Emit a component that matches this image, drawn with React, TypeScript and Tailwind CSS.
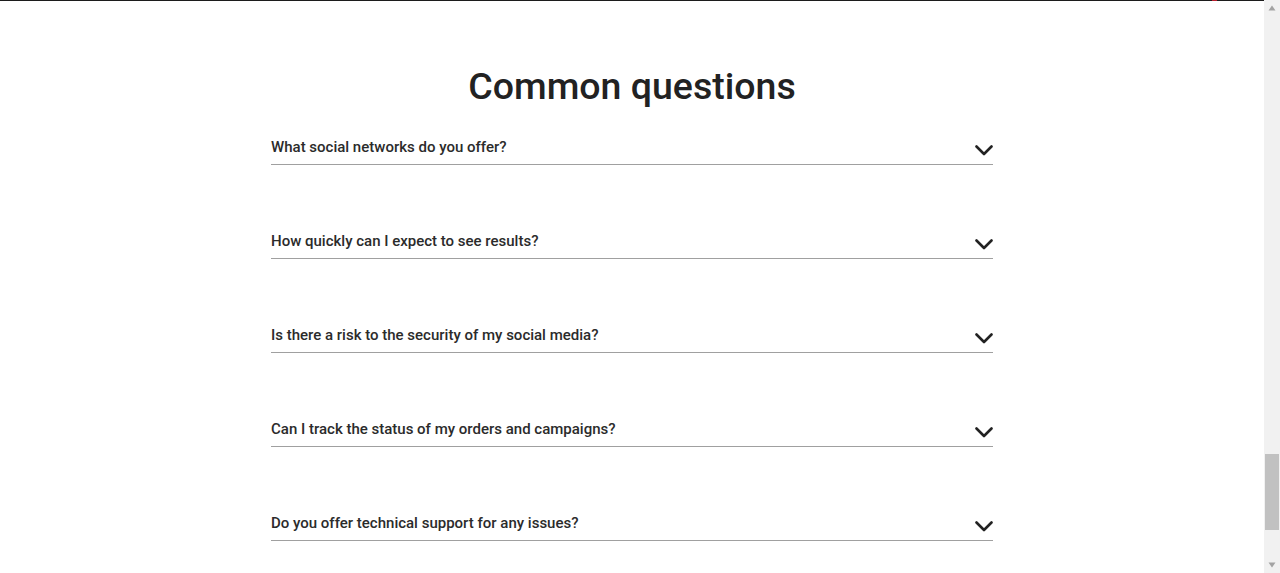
import { useState } from "react";

const questions = [
  "What social networks do you offer?",
  "How quickly can I expect to see results?",
  "Is there a risk to the security of my social media?",
  "Can I track the status of my orders and campaigns?",
  "Do you offer technical support for any issues?",
];

const Chevron = () => (
  <svg width="18" height="11" viewBox="0 0 18 11" className="mt-[8px] shrink-0">
    <polyline
      points="1.5,1.5 9,9 16.5,1.5"
      fill="none"
      stroke="#222"
      strokeWidth="2.6"
      strokeLinecap="round"
      strokeLinejoin="round"
    />
  </svg>
);

const FaqItem = ({ question }: { question: string }) => {
  const [open, setOpen] = useState(false);
  return (
    <div>
      <button
        type="button"
        onClick={() => setOpen(!open)}
        className="flex w-full items-start justify-between border-b border-[#a0a0a0] pb-[7px] text-left"
      >
        <span className="text-[15px] leading-5 font-medium text-[#2b2b2b]">{question}</span>
        <Chevron />
      </button>
    </div>
  );
};

const App = () => {
  return (
    <div className="flex h-[573px] w-full overflow-hidden bg-white font-['Roboto',sans-serif]">
      <div className="flex-1 flex flex-col">
        {/* top border */}
        <div className="flex h-[1px] bg-[#1c1c1c]">
          <div className="ml-[1212px] w-[5px] bg-[#b8202e]" />
        </div>

        <div className="mx-auto w-[722px] pt-[65px]">
          <h2 className="text-center text-[37.5px] leading-10 font-medium text-[#222]">
            Common questions
          </h2>

          <div className="mt-[31px] flex flex-col gap-[66px]">
            {questions.map((q) => (
              <FaqItem key={q} question={q} />
            ))}
          </div>
        </div>
      </div>

      {/* scrollbar */}
      <div className="flex w-4 flex-col bg-[#f1f1f1]">
        <div className="flex h-4 items-center justify-center">
          <svg width="8" height="6" viewBox="0 0 8 6">
            <polygon points="4,0.5 7.5,5.5 0.5,5.5" fill="#a3a3a3" />
          </svg>
        </div>
        <div className="flex-1">
          <div className="mx-[1px] mt-[438px] h-[76px] bg-[#c1c1c1]" />
        </div>
        <div className="flex h-4 items-center justify-center">
          <svg width="8" height="6" viewBox="0 0 8 6">
            <polygon points="0.5,0.5 7.5,0.5 4,5.5" fill="#a3a3a3" />
          </svg>
        </div>
      </div>
    </div>
  );
};

export default App;
